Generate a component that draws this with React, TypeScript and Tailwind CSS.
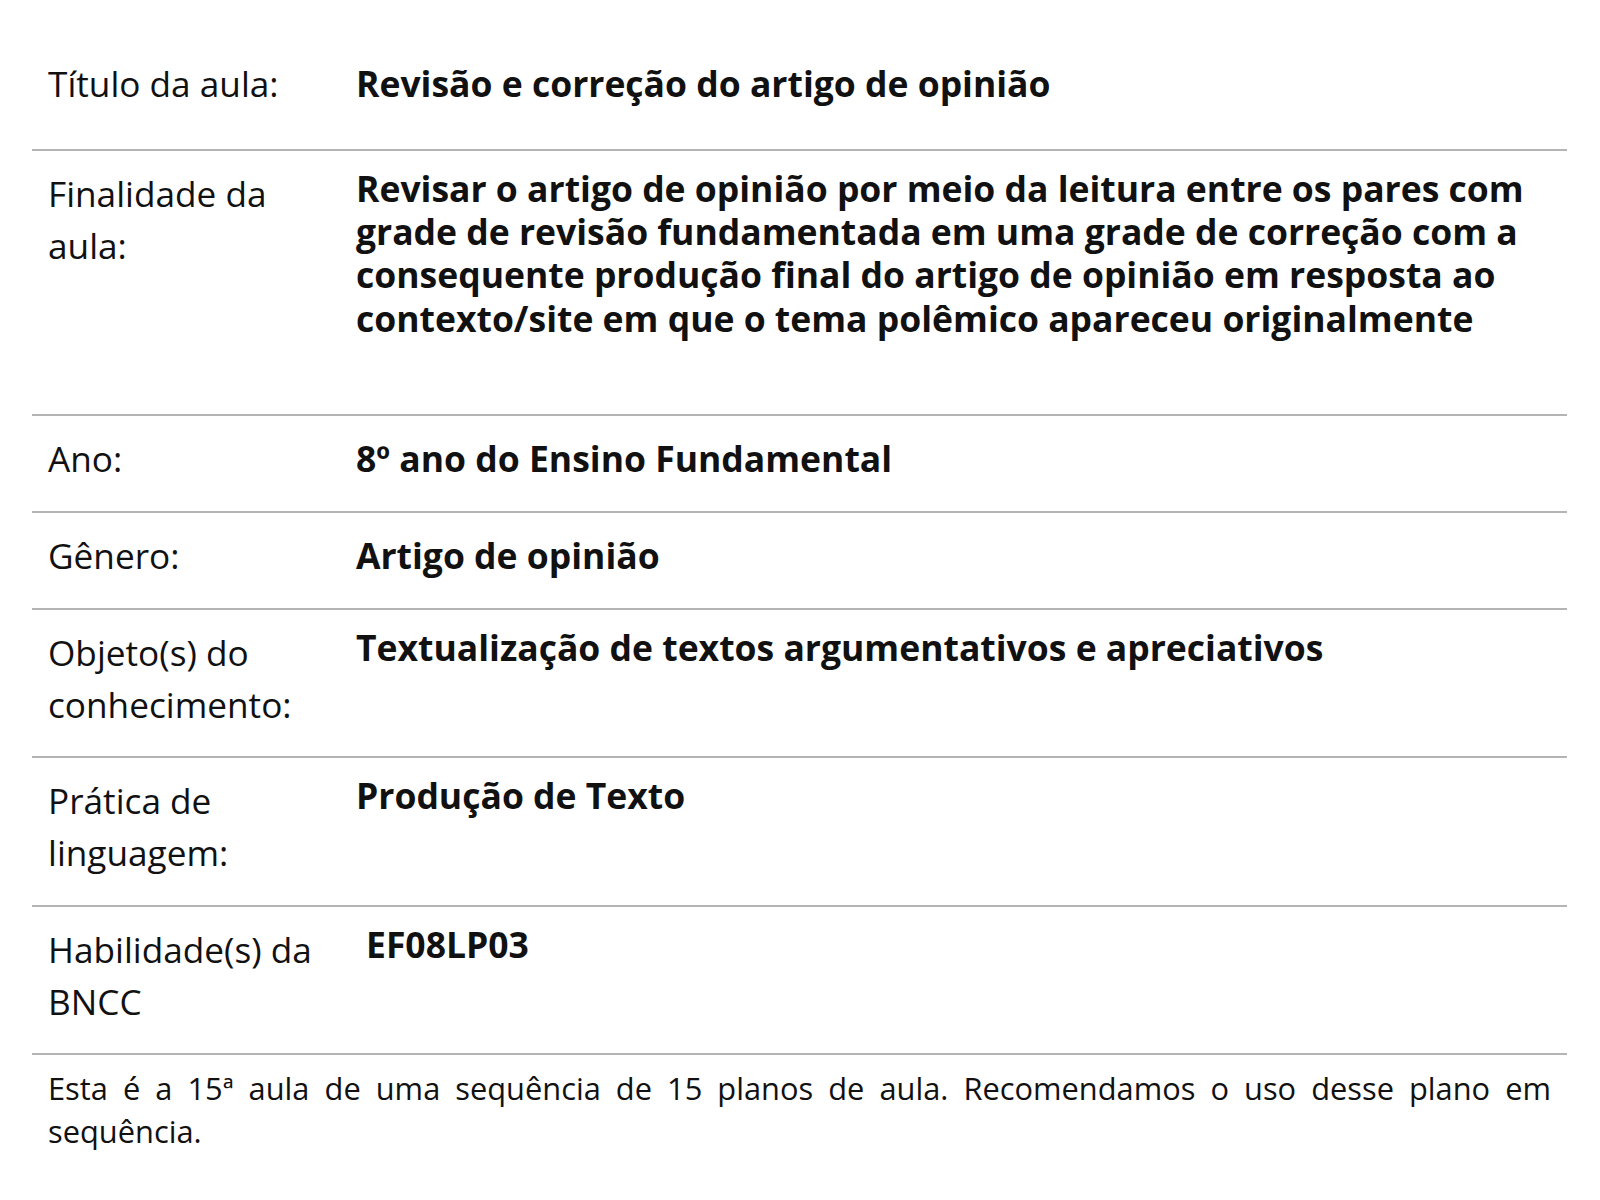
import React from "react";

type Row = { label: string[]; value: string; pb: string; indent?: boolean; tall?: boolean };

const rows: Row[] = [
  {
    label: ["Título da aula:"],
    value: "Revisão e correção do artigo de opinião",
    pb: "pb-[40px]",
    tall: true,
  },
  {
    label: ["Finalidade da", "aula:"],
    value:
      "Revisar o artigo de opinião por meio da leitura entre os pares com grade de revisão fundamentada em uma grade de correção com a consequente produção final do artigo de opinião em resposta ao contexto/site em que o tema polêmico apareceu originalmente",
    pb: "pb-[74px]",
  },
  { label: ["Ano:"], value: "8º ano do Ensino Fundamental", pb: "pb-[27px]", tall: true },
  { label: ["Gênero:"], value: "Artigo de opinião", pb: "pb-[27px]", tall: true },
  {
    label: ["Objeto(s) do", "conhecimento:"],
    value: "Textualização de textos argumentativos e apreciativos",
    pb: "pb-[26px]",
  },
  {
    label: ["Prática de", "linguagem:"],
    value: "Produção de Texto",
    pb: "pb-[27px]",
  },
  {
    label: ["Habilidade(s) da", "BNCC"],
    value: "EF08LP03",
    pb: "pb-[26px]",
    indent: true,
  },
];

export default function App() {
  return (
    <div
      className="min-h-[1200px] w-[1600px] bg-white text-[#111]"
      style={{ fontFamily: '"Open Sans", "Noto Sans", sans-serif' }}
    >
      <div className="pl-[32px] pr-[33px] pt-[41px]">
        {rows.map((r, i) => (
          <div key={i} className={`flex pt-[16px] ${r.pb} border-b-2 border-[#b4b4b4]`}>
            <div className="w-[324px] shrink-0 pl-[16px] text-[35.2px] leading-[52px] font-normal">
              {r.label.map((l, j) => (
                <div key={j}>{l}</div>
              ))}
            </div>
            <div
              className={`flex-1 pr-[18px] text-[35.5px] font-bold ${r.tall ? "leading-[52px]" : "leading-[43.2px]"} ${r.indent ? "pl-[10px]" : ""}`}
            >
              {r.value}
            </div>
          </div>
        ))}
        <div className="px-[16px] pt-[12px] text-[30.8px] leading-[43px] text-justify">
          Esta é a 15ª aula de uma sequência de 15 planos de aula. Recomendamos o uso desse plano em
          sequência.
        </div>
      </div>
    </div>
  );
}
